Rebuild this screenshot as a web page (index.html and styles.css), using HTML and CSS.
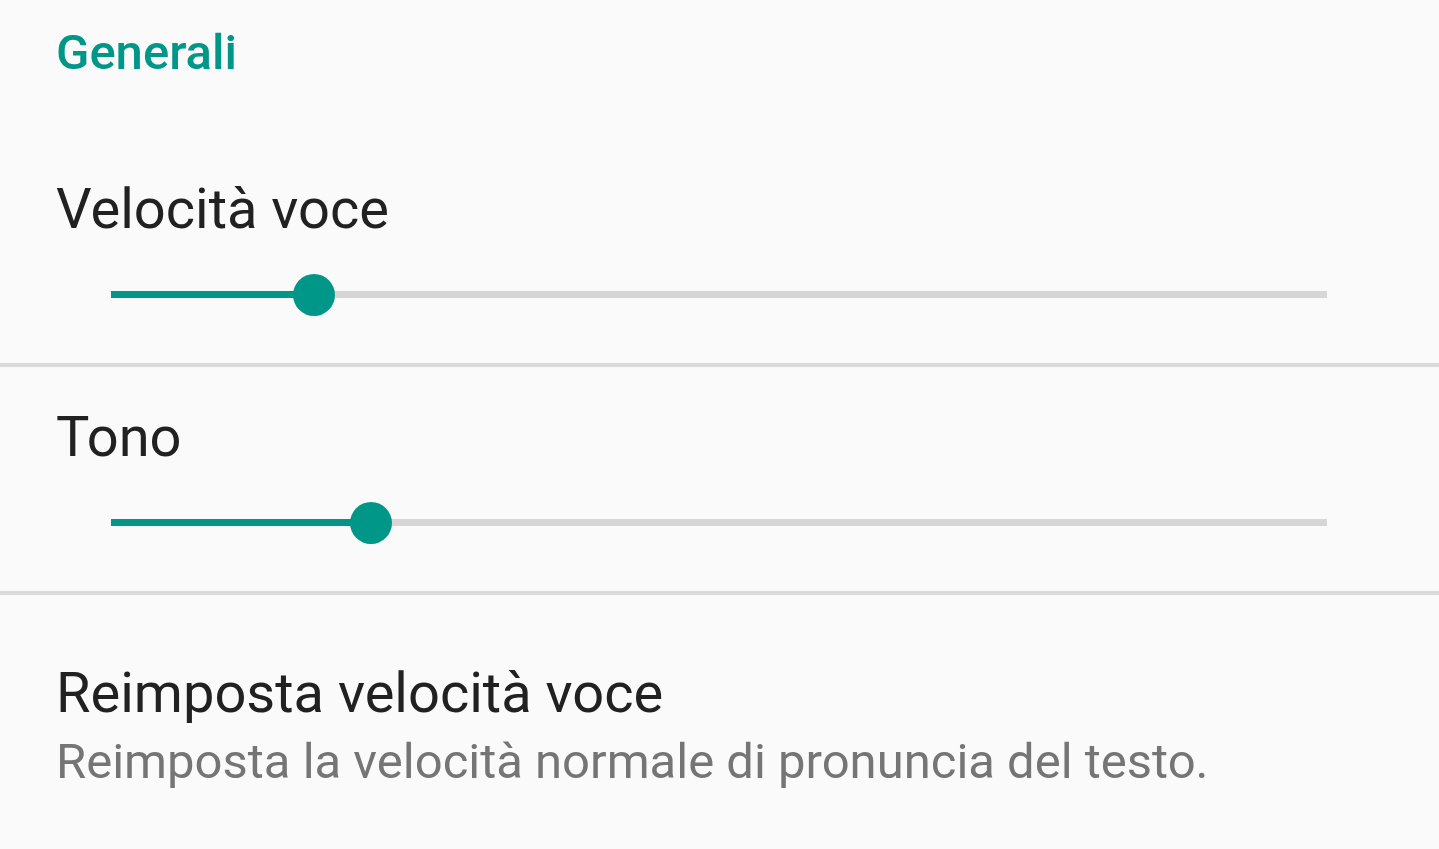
FILE: index.html
```html
<!DOCTYPE html>
<html lang="it">
<head>
    <meta charset="UTF-8">
    <meta name="viewport" content="width=device-width, initial-scale=1.0">
    <title>Impostazioni sintesi vocale</title>
    <link rel="stylesheet" href="styles.css">
</head>
<body>
    <main class="settings">
        <h2 class="category">Generali</h2>

        <section class="pref">
            <h3 class="pref-title">Velocità voce</h3>
            <div class="seekbar" style="--value: 16.73%">
                <div class="track"><div class="progress"></div></div>
                <div class="thumb"></div>
            </div>
        </section>
        <hr class="divider">

        <section class="pref">
            <h3 class="pref-title">Tono</h3>
            <div class="seekbar" style="--value: 21.42%">
                <div class="track"><div class="progress"></div></div>
                <div class="thumb"></div>
            </div>
        </section>
        <hr class="divider">

        <section class="pref pref-text">
            <h3 class="pref-title">Reimposta velocità voce</h3>
            <p class="pref-summary">Reimposta la velocità normale di pronuncia del testo.</p>
        </section>
    </main>
</body>
</html>
```

FILE: styles.css
```css
:root {
    --accent: #009688;
    --background: #fafafa;
    --text-primary: #212121;
    --text-secondary: #757575;
    --track: #d6d6d6;
    --divider: #dadada;
}

* {
    margin: 0;
    padding: 0;
    box-sizing: border-box;
}

body {
    background-color: var(--background);
    font-family: Roboto, 'Noto Sans', sans-serif;
    color: var(--text-primary);
    overflow: hidden;
}

.settings {
    display: flex;
    flex-direction: column;
}

.category {
    color: var(--accent);
    font-size: 49px;
    font-weight: 500;
    line-height: 48px;
    padding: 29px 56px 62px;
}

.pref {
    padding: 38px 0 47.5px;
}

.pref-title {
    font-size: 56px;
    font-weight: 400;
    line-height: 64px;
    padding: 0 56px;
}

.seekbar {
    position: relative;
    height: 42px;
    margin: 32.5px 112px 0 111px;
    display: flex;
    align-items: center;
}

.track {
    width: 100%;
    height: 7px;
    background-color: var(--track);
}

.progress {
    width: var(--value);
    height: 100%;
    background-color: var(--accent);
}

.thumb {
    position: absolute;
    top: 0;
    left: var(--value);
    width: 42px;
    height: 42px;
    margin-left: -21px;
    border-radius: 50%;
    background-color: var(--accent);
}

.divider {
    border: none;
    height: 4px;
    background-color: var(--divider);
}

.pref-text {
    padding-top: 66px;
}

.pref-summary {
    font-size: 49px;
    line-height: 66px;
    margin-top: 4px;
    padding: 0 56px;
    color: var(--text-secondary);
}
```
